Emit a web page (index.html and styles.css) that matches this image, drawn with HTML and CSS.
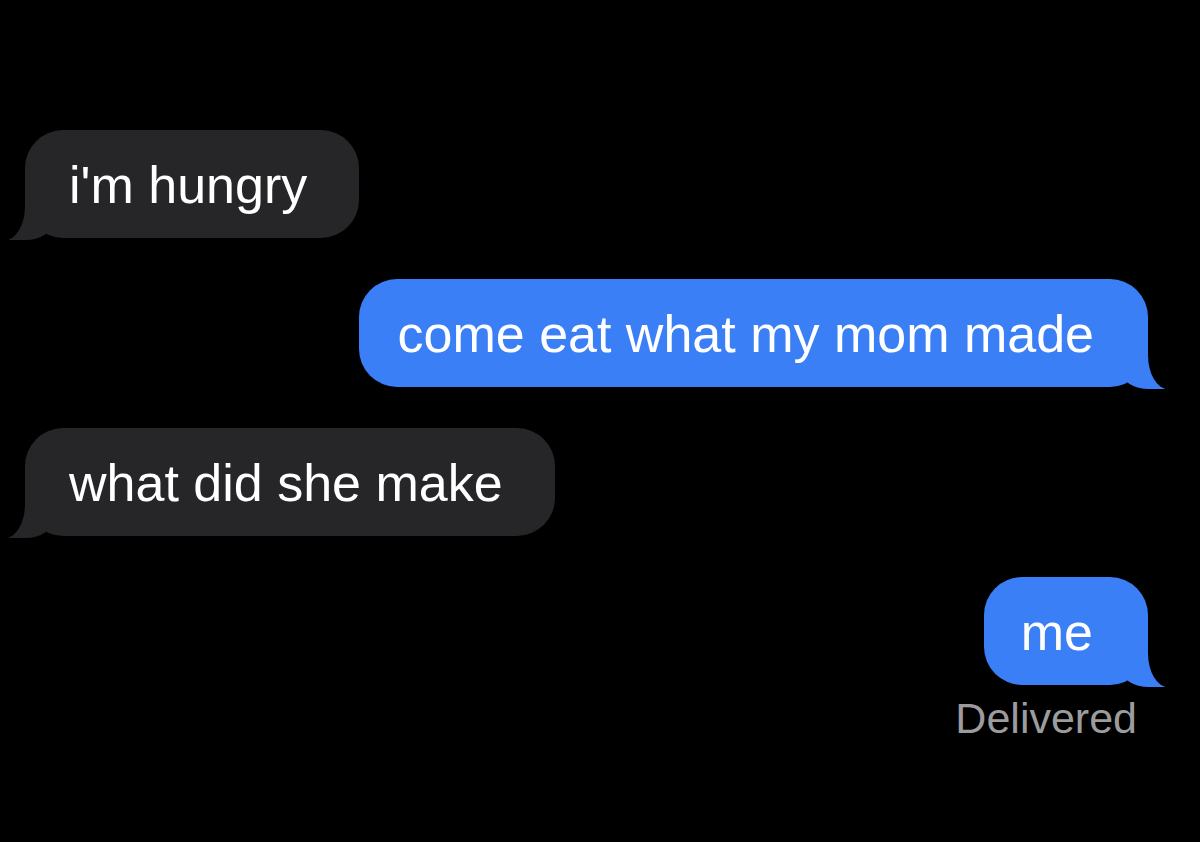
FILE: index.html
```html
<!DOCTYPE html>
<html lang="en">
<head>
  <meta charset="UTF-8" />
  <meta name="viewport" content="width=device-width, initial-scale=1.0" />
  <title>Messages</title>
  <link rel="stylesheet" href="styles.css">
</head>
<body>
  <div class="thread">
    <div class="bubble in">i'm hungry</div>
    <div class="bubble out">come eat what my mom made</div>
    <div class="bubble in">what did she make</div>
    <div class="last">
      <div class="bubble out short">me</div>
      <div class="status">Delivered</div>
    </div>
  </div>
</body>
</html>
```

FILE: styles.css
```css
body {
  margin: 0;
  padding: 0;
  background: #000;
  font-family: 'Liberation Sans', Arial, sans-serif;
  height: 842px;
  overflow: hidden;
}
.thread {
  display: flex;
  flex-direction: column;
  gap: 41px;
  padding: 130px 52px 0 25px;
}
.bubble {
  position: relative;
  font-size: 52px;
  line-height: 60px;
  padding: 25px 52px 23px 44px;
  border-radius: 38px;
  color: #fff;
  white-space: nowrap;
}
.bubble::before,
.bubble::after {
  content: "";
  position: absolute;
  bottom: -2px;
  height: 46px;
}
.in {
  align-self: flex-start;
  background: #262528;
}
.in::before {
  left: -16px;
  width: 44px;
  background: #262528;
  border-bottom-right-radius: 28px 18px;
}
.in::after {
  left: -60px;
  width: 60px;
  background: #000;
  border-bottom-right-radius: 20px 34px;
}
.out {
  align-self: flex-end;
  background: #3a7ff5;
  padding: 25px 54px 23px 39px;
}
.out::before {
  right: -17px;
  width: 44px;
  background: #3a7ff5;
  border-bottom-left-radius: 28px 18px;
}
.out::after {
  right: -60px;
  width: 60px;
  background: #000;
  border-bottom-left-radius: 20px 34px;
}
.short {
  padding: 25px 55px 23px 37px;
}
.last {
  align-self: flex-end;
  display: flex;
  flex-direction: column;
  align-items: flex-end;
}
.status {
  margin-top: 12px;
  margin-right: 11px;
  font-size: 43px;
  line-height: 43px;
  color: #9c9c9f;
}
```
